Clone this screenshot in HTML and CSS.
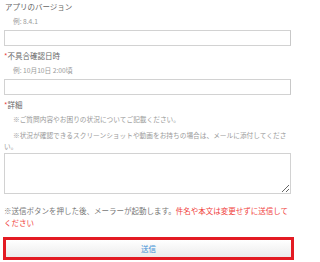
FILE: index.html
```html
<!DOCTYPE html>
<html lang="ja">
<head>
<meta charset="utf-8">
<link rel="stylesheet" href="styles.css">
</head>
<body>
<form class="form">
  <div class="field">
    <div class="label">アプリのバージョン</div>
    <div class="note">例: 8.4.1</div>
    <input class="input" type="text">
  </div>
  <div class="field">
    <div class="label"><span class="req">*</span>不具合確認日時</div>
    <div class="note">例: 10月10日 2:00頃</div>
    <input class="input" type="text">
  </div>
  <div class="field">
    <div class="label"><span class="req">*</span>詳細</div>
    <div class="note">※ご質問内容やお困りの状況についてご記載ください。</div>
    <div class="note note-gap">※状況が確認できるスクリーンショットや動画をお持ちの場合は、メールに添付してください。</div>
    <textarea class="textarea"></textarea>
  </div>
  <p class="warning">※送信ボタンを押した後、メーラーが起動します。<span class="warn-red">件名や本文は変更せずに送信してください</span></p>
  <button class="submit" type="button">送信</button>
</form>
</body>
</html>
```

FILE: styles.css
```css
html, body {
  margin: 0;
  padding: 0;
  background: #fff;
}
body {
  font-family: "Noto Sans CJK JP", "Noto Sans", sans-serif;
  color: #6e6e6e;
}
.form {
  width: 287px;
  padding-left: 4px;
  display: flex;
  flex-direction: column;
}
.field {
  display: flex;
  flex-direction: column;
}
.field + .field {
  margin-top: 3px;
}
.label {
  font-size: 7.5px;
  line-height: 14px;
  padding-left: 1px;
  color: #666;
}
.req {
  color: #e8403a;
  margin-left: -1px;
  margin-right: 0;
}
.note {
  font-size: 6.7px;
  line-height: 11px;
  text-indent: 9px;
  color: #9a9a9a;
  margin-top: 2px;
}
.note-gap {
  margin-top: 5px;
}
.input {
  display: block;
  box-sizing: border-box;
  width: 287px;
  height: 16px;
  margin: 3px 0 0 0;
  border: 1px solid #d2d2d2;
  border-right-color: #c8c8c8;
  padding: 0 3px;
  background: #fff;
  outline: none;
}
.textarea {
  display: block;
  box-sizing: border-box;
  width: 287px;
  height: 41px;
  margin: 1px 0 0 0;
  border: 1px solid #d2d2d2;
  padding: 2px;
  background: #fff;
  font-family: inherit;
  outline: none;
}
.warning {
  margin: 11px 0 0 0;
  font-size: 7.5px;
  line-height: 12px;
  color: #777;
}
.warn-red {
  color: #f0403a;
}
.submit {
  display: block;
  box-sizing: border-box;
  width: 291px;
  height: 23px;
  margin: 8px 0 0 -1px;
  border: 3px solid #e31b23;
  background: linear-gradient(#ffffff, #ececec);
  color: #3d8fd6;
  font-family: inherit;
  font-size: 7.5px;
  padding: 0;
}
```
